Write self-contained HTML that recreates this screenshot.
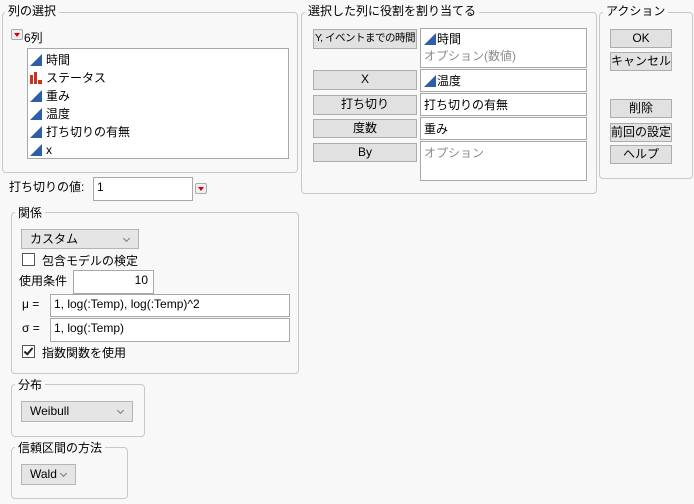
<!DOCTYPE html>
<html><head><meta charset="utf-8"><style>
*{box-sizing:border-box}
body{margin:0;width:694px;height:504px;background:#f8f8f8;font-family:"Liberation Sans","Noto Sans CJK JP",sans-serif;font-size:12px;color:#000;position:relative;overflow:hidden}
.a{position:absolute;white-space:nowrap}
.g{position:absolute;border:1px solid #c8c8c8;border-radius:4px}
.t{position:absolute;background:#f8f8f8;padding:0 3px;line-height:14px;white-space:nowrap}
.w{position:absolute;background:#fff;border:1px solid #a8a8a8}
.b{position:absolute;background:#e1e1e1;border:1px solid #adadad;text-align:center;line-height:17px;white-space:nowrap;overflow:hidden}
.dd{position:absolute;background:#e5e5e5;border:1px solid #b5b5b5;line-height:18px;padding-left:8px}
.dd:after{content:"";position:absolute;right:9px;top:6px;width:4px;height:4px;border-right:1px solid #777;border-bottom:1px solid #777;transform:rotate(45deg)}
.tri{display:inline-block;width:0;height:0;border-left:12px solid transparent;border-bottom:12px solid #2f5ea8;vertical-align:-2px;margin-right:4px}
.gr{color:#8c8c8c}
.rb{position:absolute;width:12px;height:11px;border:1px solid #aaa;border-radius:2px;background:#f0f0f0}
.rb:after{content:"";position:absolute;left:2px;top:3px;border-left:3px solid transparent;border-right:3px solid transparent;border-top:4px solid #d00}
.cb{position:absolute;width:13px;height:13px;border:1px solid #555;background:#fff}
</style></head><body>
<div class="g" style="left:2px;top:12px;width:296px;height:161px"></div>
<div class="t" style="left:5px;top:4px">列の選択</div>
<div class="rb" style="left:11px;top:29px"></div>
<div class="a" style="left:24px;top:29px">6列</div>
<div class="w" style="left:27px;top:48px;width:262px;height:111px">
<div class="a" style="left:2px;top:2px;line-height:18px">
<div><span class="tri"></span>時間</div>
<div><span style="display:inline-block;width:12px;height:12px;vertical-align:-2px;margin-right:4px;position:relative"><span style="position:absolute;left:0;bottom:0;width:3px;height:9px;background:#c8321e"></span><span style="position:absolute;left:4px;bottom:0;width:3px;height:12px;background:#c8321e"></span><span style="position:absolute;left:8px;bottom:0;width:4px;height:4px;background:#c8321e"></span></span>ステータス</div>
<div><span class="tri"></span>重み</div>
<div><span class="tri"></span>温度</div>
<div><span class="tri"></span>打ち切りの有無</div>
<div><span class="tri"></span>x</div>
</div></div>

<div class="a" style="left:9px;top:178px">打ち切りの値:</div>
<div class="w" style="left:93px;top:177px;width:100px;height:24px;padding:2px 3px">1</div>
<div class="rb" style="left:195px;top:183px"></div>

<div class="g" style="left:11px;top:212px;width:288px;height:162px"></div>
<div class="t" style="left:15px;top:206px">関係</div>
<div class="dd" style="left:21px;top:229px;width:118px;height:20px">カスタム</div>
<div class="cb" style="left:22px;top:253px"></div>
<div class="a" style="left:42px;top:252px">包含モデルの検定</div>
<div class="a" style="left:19px;top:272px">使用条件</div>
<div class="w" style="left:73px;top:270px;width:81px;height:24px;text-align:right;padding:2px 5px">10</div>
<div class="a" style="left:22px;top:297px">μ =</div>
<div class="w" style="left:50px;top:294px;width:240px;height:23px;padding:2px 3px">1, log(:Temp), log(:Temp)^2</div>
<div class="a" style="left:22px;top:321px">σ =</div>
<div class="w" style="left:50px;top:318px;width:240px;height:24px;padding:2px 3px">1, log(:Temp)</div>
<div class="cb" style="left:22px;top:345px"><div class="a" style="left:3px;top:0px;width:5px;height:9px;border-right:2px solid #222;border-bottom:2px solid #222;transform:rotate(40deg)"></div></div>
<div class="a" style="left:42px;top:344px">指数関数を使用</div>

<div class="g" style="left:11px;top:384px;width:134px;height:53px"></div>
<div class="t" style="left:15px;top:378px">分布</div>
<div class="dd" style="left:21px;top:401px;width:112px;height:21px">Weibull</div>

<div class="g" style="left:11px;top:447px;width:117px;height:52px"></div>
<div class="t" style="left:15px;top:441px">信頼区間の方法</div>
<div class="dd" style="left:21px;top:464px;width:55px;height:21px">Wald</div>

<div class="g" style="left:301px;top:12px;width:296px;height:182px"></div>
<div class="t" style="left:305px;top:4px">選択した列に役割を割り当てる</div>
<div class="b" style="left:313px;top:29px;width:104px;height:20px;font-size:10.5px;letter-spacing:-0.5px;padding:0">Y, イベントまでの時間</div>
<div class="b" style="left:313px;top:70px;width:104px;height:20px">X</div>
<div class="b" style="left:313px;top:95px;width:104px;height:20px">打ち切り</div>
<div class="b" style="left:313px;top:119px;width:104px;height:19px">度数</div>
<div class="b" style="left:313px;top:143px;width:104px;height:19px">By</div>
<div class="w" style="left:420px;top:28px;width:167px;height:40px;padding:2px 3px;line-height:17px"><div><span class="tri" style="margin-right:1px"></span>時間</div><div class="gr">オプション(数値)</div></div>
<div class="w" style="left:420px;top:69px;width:167px;height:23px;padding:2px 3px"><span class="tri" style="margin-right:1px"></span>温度</div>
<div class="w" style="left:420px;top:93px;width:167px;height:23px;padding:2px 3px">打ち切りの有無</div>
<div class="w" style="left:420px;top:117px;width:167px;height:23px;padding:2px 3px">重み</div>
<div class="w gr" style="left:420px;top:141px;width:167px;height:40px;padding:2px 3px">オプション</div>

<div class="g" style="left:599px;top:12px;width:94px;height:167px"></div>
<div class="t" style="left:603px;top:4px">アクション</div>
<div class="b" style="left:610px;top:29px;width:62px;height:19px">OK</div>
<div class="b" style="left:610px;top:52px;width:62px;height:19px">キャンセル</div>
<div class="b" style="left:610px;top:99px;width:62px;height:19px">削除</div>
<div class="b" style="left:610px;top:123px;width:62px;height:19px">前回の設定</div>
<div class="b" style="left:610px;top:145px;width:62px;height:19px">ヘルプ</div>
</body></html>
